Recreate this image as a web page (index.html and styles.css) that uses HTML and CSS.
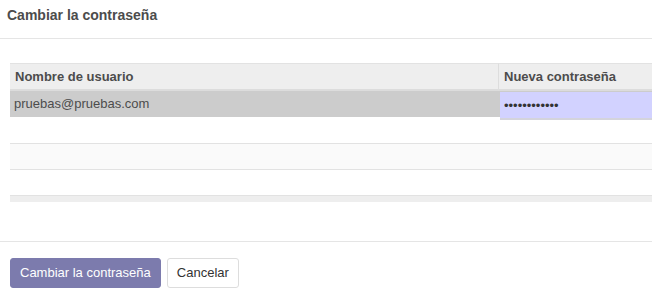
FILE: index.html
```html
<!DOCTYPE html>
<html lang="es">
<head>
<meta charset="utf-8">
<title>Cambiar la contraseña</title>
<link rel="stylesheet" href="styles.css">
</head>
<body>
<div class="modal">
  <header class="modal-header">
    <h4 class="modal-title">Cambiar la contraseña</h4>
  </header>
  <main class="modal-body">
    <table class="list">
      <colgroup>
        <col class="col-user">
        <col class="col-pass">
      </colgroup>
      <thead>
        <tr>
          <th class="th-user">Nombre de usuario</th>
          <th>Nueva contraseña</th>
        </tr>
      </thead>
      <tbody>
        <tr class="row-selected">
          <td class="cell-user">pruebas@pruebas.com</td>
          <td class="cell-pass"><input class="pass-input" type="password" value="xxxxxxxxxxxx" readonly></td>
        </tr>
        <tr class="row-empty"><td>&nbsp;</td><td>&nbsp;</td></tr>
        <tr class="row-empty row-striped"><td>&nbsp;</td><td>&nbsp;</td></tr>
        <tr class="row-empty"><td>&nbsp;</td><td>&nbsp;</td></tr>
      </tbody>
      <tfoot>
        <tr><td class="foot-cell" colspan="2"></td></tr>
      </tfoot>
    </table>
  </main>
  <footer class="modal-footer">
    <button class="btn btn-primary" type="button">Cambiar la contraseña</button>
    <button class="btn btn-default" type="button">Cancelar</button>
  </footer>
</div>
</body>
</html>
```
FILE: styles.css
```css
html, body {
  margin: 0;
  padding: 0;
  background: #ffffff;
}

body {
  font-family: "Liberation Sans", Arial, sans-serif;
  font-size: 13px;
  color: #4c4c4c;
}

.modal {
  width: 652px;
  overflow: hidden;
}

.modal-header {
  padding: 5px 7px 13px;
  border-bottom: 1px solid #e5e5e5;
}

.modal-title {
  margin: 0;
  font-size: 14px;
  line-height: 20px;
  font-weight: bold;
  color: #4c4c4c;
}

.modal-body {
  padding: 24px 0 39px 10px;
}

.list {
  width: 642px;
  table-layout: fixed;
  border-collapse: separate;
  border-spacing: 0;
}

.col-user { width: 489px; }
.col-pass { width: 153px; }

.list th {
  text-align: left;
  font-weight: bold;
  font-size: 13px;
  line-height: 25px;
  padding: 0 4px 0 5px;
  background: #eeeeee;
  border-top: 1px solid #e2e2e2;
  border-bottom: 2px solid #dcdcdc;
  white-space: nowrap;
  overflow: hidden;
}

.list .th-user {
  border-right: 1px solid #dddddd;
}

.list td {
  padding: 0 4px;
  font-size: 13px;
  white-space: nowrap;
}

.row-selected td {
  line-height: 26px;
  background: #cccccc;
}

.row-selected .cell-pass {
  position: relative;
  background: #cccccc;
  padding: 0;
}

.pass-input {
  position: absolute;
  top: 1px;
  left: 1px;
  right: 0;
  width: calc(100% - 1px);
  height: 28px;
  box-sizing: border-box;
  margin: 0;
  padding: 0 4px;
  border: 0;
  border-bottom: 2px solid #d4d4dc;
  background: #d2d2ff;
  font-family: "Liberation Sans", Arial, sans-serif;
  font-size: 13px;
  color: #333333;
  outline: none;
}

.row-empty td {
  line-height: 25px;
  border-bottom: 1px solid #e2e2e2;
  background: #ffffff;
}

.row-empty:first-child td,
.row-selected + .row-empty td {
  line-height: 26px;
}

.row-striped td {
  background: #fafafa;
}

.foot-cell {
  height: 6px;
  padding: 0;
  background: #eeeeee;
}

.list tfoot td {
  height: 6px;
  line-height: 6px;
  padding: 0;
  background: #eeeeee;
}

.modal-footer {
  border-top: 1px solid #e5e5e5;
  padding: 16px 10px 0;
  display: flex;
  gap: 6px;
}

.btn {
  font-family: "Liberation Sans", Arial, sans-serif;
  font-size: 13px;
  line-height: 18px;
  padding: 5px 9px;
  border: 1px solid transparent;
  border-radius: 3px;
  height: 30px;
  box-sizing: border-box;
  cursor: pointer;
  margin: 0;
}

.btn-primary {
  background: #7c7bad;
  border-color: #7c7bad;
  color: #ffffff;
}

.btn-default {
  background: #ffffff;
  border-color: #dddddd;
  color: #333333;
}
```
